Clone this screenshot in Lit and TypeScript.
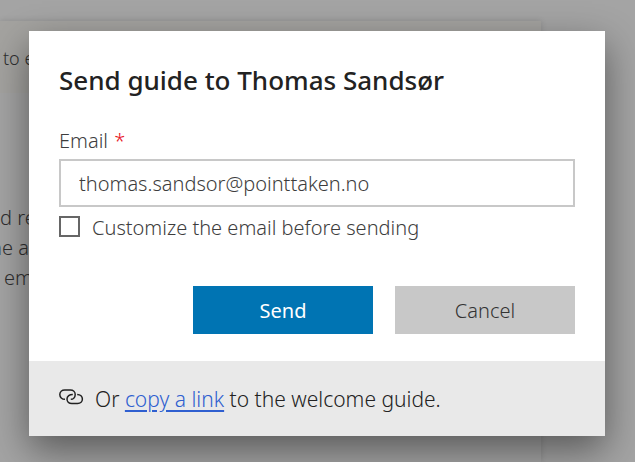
import { LitElement, html, css } from "lit";
import { customElement, state } from "lit/decorators.js";

@customElement("link-icon")
export class LinkIcon extends LitElement {
  static styles = css`
    :host { display: block; width: 26px; height: 18px; }
    svg { display: block; width: 100%; height: 100%; }
  `;
  render() {
    return html`<svg viewBox="0 0 26 18" fill="none" stroke="#222" stroke-width="1.5" aria-hidden="true">
      <path d="M6 11.3C2.9 11.3 .8 9.2 .8 6.6C.8 3.8 3 2 5.7 2H11.4C14.2 2 16.2 3.9 16.2 6.4C16.2 9.2 14.3 11.3 11.8 11.3"/>
      <path d="M13.8 6.4C10.6 6.3 8 8.3 8 11.1C8 13.8 10.1 15.6 12.8 15.6H18.6C21.4 15.6 23.4 13.7 23.4 11.1C23.4 8.5 21.4 6.4 18.2 6.4"/>
    </svg>`;
  }
}

@customElement("guide-dialog")
export class GuideDialog extends LitElement {
  @state() private email = "thomas.sandsor@pointtaken.no";

  static styles = css`
    :host { display: block; background: #fff; box-shadow: 0 14px 36px rgba(0, 0, 0, 0.46); color: #3d3d3d; }
    .body { padding: 29px 30px 27px; }
    h2 { margin: 0 0 25px; font-size: 26px; line-height: 40px; font-weight: 500; color: #222; }
    .label { display: block; font-size: 20px; line-height: 32px; margin-bottom: 2px; }
    .required { color: #e81123; margin-left: 1px; }
    .field { display: block; box-sizing: border-box; width: 100%; height: 48px; padding: 0 18px; border: 2px solid #c8c8c8; border-radius: 0; background: #fff; font: inherit; font-size: 20px; color: #3d3d3d; outline: none; }
    .check { display: flex; align-items: center; gap: 12px; margin-top: 5px; font-size: 20px; line-height: 32px; }
    .check input { appearance: none; box-sizing: border-box; flex: none; width: 21px; height: 21px; margin: 0 0 4px; border: 2px solid #666; background: #fff; }
    .check input:checked { background: #0072b0; }
    .actions { display: flex; justify-content: flex-end; gap: 22px; margin-top: 42px; }
    button { width: 180px; height: 48px; padding: 0; border: 0; font: inherit; font-size: 20px; background: #c8c8c8; color: #333; }
    .primary { background: #0074b3; color: #fff; font-weight: 400; }
    .footer { display: flex; align-items: center; padding: 20px 30px 19px; gap: 10px; background: #e9e9e9; color: #222; }
    .footer p { margin: 0; font-size: 21px; line-height: 36px; }
    a { color: #2f5fd0; text-underline-offset: 3px; text-decoration-thickness: 2px; }
    link-icon { margin-bottom: 4px; }
  `;

  render() {
    return html`
      <form class="body" @submit=${(e: Event) => e.preventDefault()}>
        <h2 id="title">Send guide to Thomas Sandsør</h2>
        <label class="label" for="email">Email <span class="required">*</span></label>
        <input class="field" id="email" type="email" required .value=${this.email}
          @input=${(e: Event) => (this.email = (e.target as HTMLInputElement).value)} />
        <label class="check"><input type="checkbox" /><span>Customize the email before sending</span></label>
        <div class="actions">
          <button class="primary" type="submit">Send</button>
          <button type="button">Cancel</button>
        </div>
      </form>
      <div class="footer">
        <link-icon></link-icon>
        <p>Or <a href="#guide">copy a link</a> to the welcome guide.</p>
      </div>
    `;
  }
}

@customElement("app-root")
export class AppRoot extends LitElement {
  static styles = css`
    :host { display: block; position: relative; min-height: 100vh; overflow: hidden; box-sizing: border-box; padding: 21px 94px 0 0; background: #a4a4a4; font-family: "Noto Sans", sans-serif; font-weight: 300; }
    .page { min-height: calc(100vh - 21px); background: #a4a4a4; box-shadow: 0 0 6px rgba(0, 0, 0, 0.14); color: #2f2f2f; }
    .banner { padding: 21px 0 19px 3px; background: #a4a3a0; font-size: 18px; line-height: 32px; }
    .text { margin-top: 110px; font-size: 20px; line-height: 30px; }
    .text p { margin: 0; }
    .text .hanging { text-indent: -10px; }
    .text .inset { padding-left: 4px; }
    .overlay { position: absolute; inset: 0; padding: 31px 30px 26px 29px; }
  `;

  render() {
    return html`
      <div class="page">
        <div class="banner">to e</div>
        <div class="text"><p>d re</p><p class="hanging">ne a</p><p class="inset">em</p></div>
      </div>
      <div class="overlay"><guide-dialog role="dialog" aria-label="Send guide"></guide-dialog></div>
    `;
  }
}
